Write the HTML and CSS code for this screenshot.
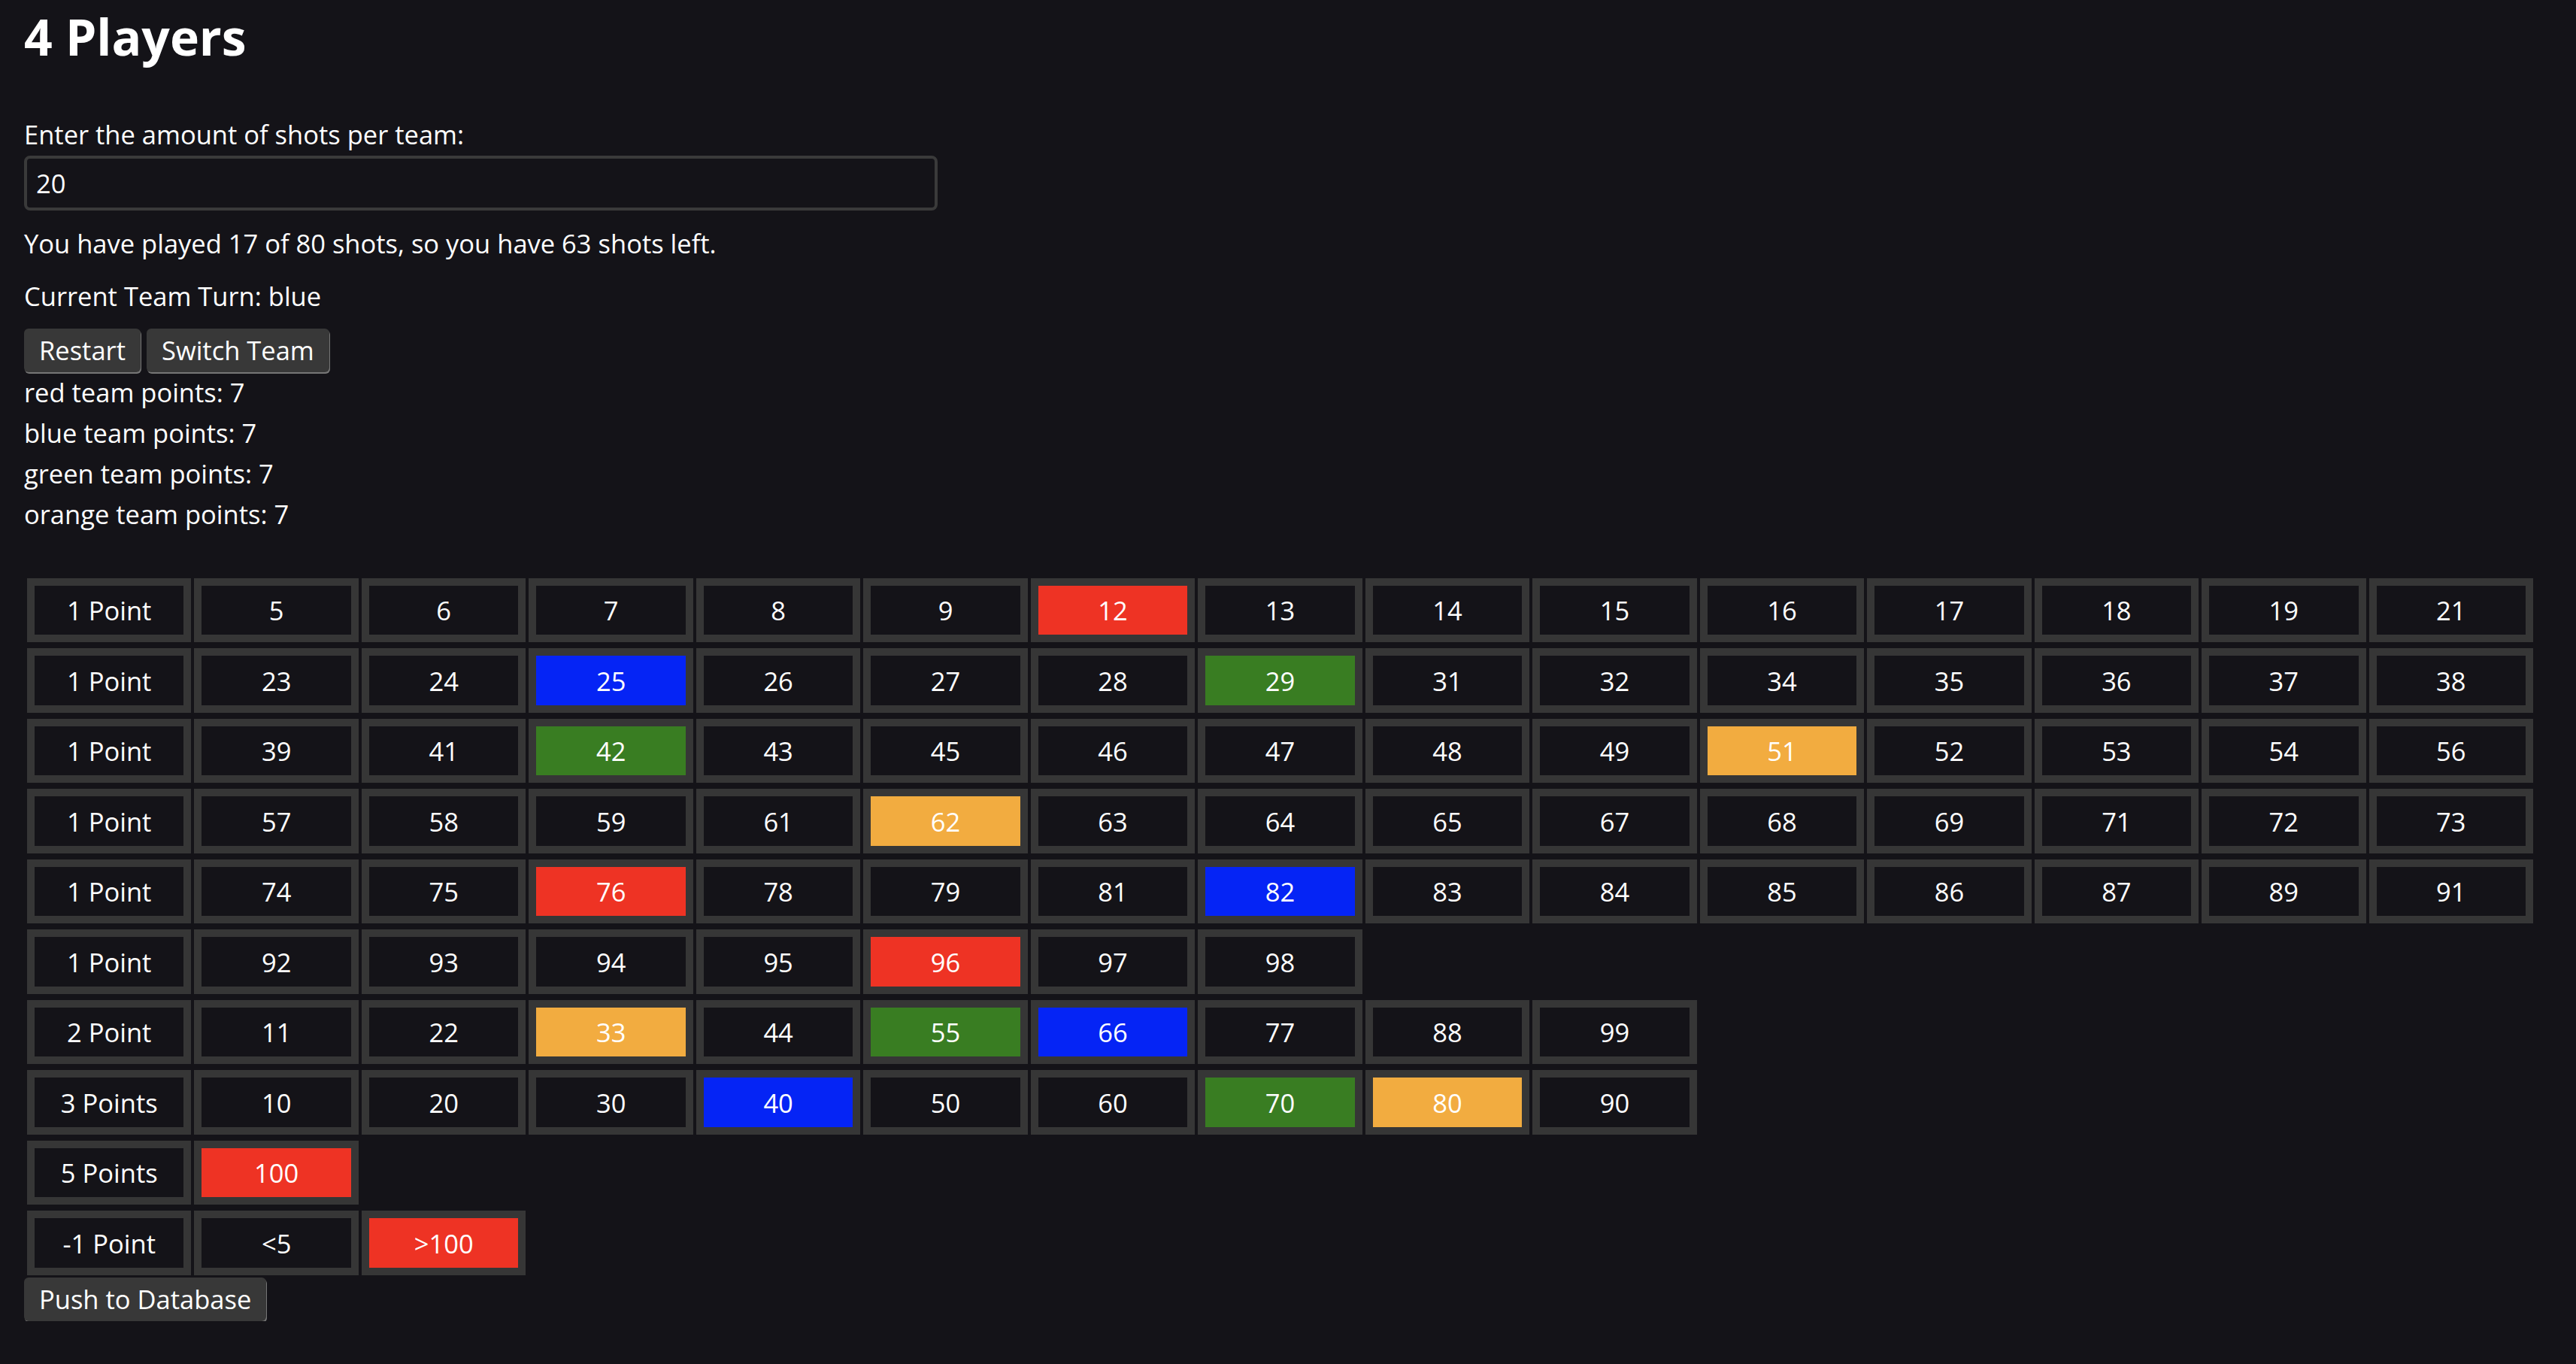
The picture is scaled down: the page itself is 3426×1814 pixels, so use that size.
FILE: index.html
```html
<!DOCTYPE html>
<html lang="en">
<head>
<meta charset="utf-8">
<title>4 Players</title>
<link rel="stylesheet" href="styles.css">
</head>
<body>
<main class="page">
  <h1 class="title">4 Players</h1>
  <label class="line label" for="shots">Enter the amount of shots per team:</label>
  <input class="shots-input" id="shots" type="text" value="20">
  <p class="line status">You have played 17 of 80 shots, so you have 63 shots left.</p>
  <p class="line turn">Current Team Turn: blue</p>
  <div class="actions">
    <button class="btn">Restart</button>
    <button class="btn">Switch Team</button>
  </div>
  <div class="scores">
    <div class="line">red team points: 7</div>
    <div class="line">blue team points: 7</div>
    <div class="line">green team points: 7</div>
    <div class="line">orange team points: 7</div>
  </div>
  <div class="board">
    <div class="row">
      <div class="cell">1 Point</div><div class="cell">5</div><div class="cell">6</div><div class="cell">7</div><div class="cell">8</div><div class="cell">9</div><div class="cell red">12</div><div class="cell">13</div><div class="cell">14</div><div class="cell">15</div><div class="cell">16</div><div class="cell">17</div><div class="cell">18</div><div class="cell">19</div><div class="cell">21</div>
    </div>
    <div class="row">
      <div class="cell">1 Point</div><div class="cell">23</div><div class="cell">24</div><div class="cell blue">25</div><div class="cell">26</div><div class="cell">27</div><div class="cell">28</div><div class="cell green">29</div><div class="cell">31</div><div class="cell">32</div><div class="cell">34</div><div class="cell">35</div><div class="cell">36</div><div class="cell">37</div><div class="cell">38</div>
    </div>
    <div class="row">
      <div class="cell">1 Point</div><div class="cell">39</div><div class="cell">41</div><div class="cell green">42</div><div class="cell">43</div><div class="cell">45</div><div class="cell">46</div><div class="cell">47</div><div class="cell">48</div><div class="cell">49</div><div class="cell orange">51</div><div class="cell">52</div><div class="cell">53</div><div class="cell">54</div><div class="cell">56</div>
    </div>
    <div class="row">
      <div class="cell">1 Point</div><div class="cell">57</div><div class="cell">58</div><div class="cell">59</div><div class="cell">61</div><div class="cell orange">62</div><div class="cell">63</div><div class="cell">64</div><div class="cell">65</div><div class="cell">67</div><div class="cell">68</div><div class="cell">69</div><div class="cell">71</div><div class="cell">72</div><div class="cell">73</div>
    </div>
    <div class="row">
      <div class="cell">1 Point</div><div class="cell">74</div><div class="cell">75</div><div class="cell red">76</div><div class="cell">78</div><div class="cell">79</div><div class="cell">81</div><div class="cell blue">82</div><div class="cell">83</div><div class="cell">84</div><div class="cell">85</div><div class="cell">86</div><div class="cell">87</div><div class="cell">89</div><div class="cell">91</div>
    </div>
    <div class="row">
      <div class="cell">1 Point</div><div class="cell">92</div><div class="cell">93</div><div class="cell">94</div><div class="cell">95</div><div class="cell red">96</div><div class="cell">97</div><div class="cell">98</div>
    </div>
    <div class="row">
      <div class="cell">2 Point</div><div class="cell">11</div><div class="cell">22</div><div class="cell orange">33</div><div class="cell">44</div><div class="cell green">55</div><div class="cell blue">66</div><div class="cell">77</div><div class="cell">88</div><div class="cell">99</div>
    </div>
    <div class="row">
      <div class="cell">3 Points</div><div class="cell">10</div><div class="cell">20</div><div class="cell">30</div><div class="cell blue">40</div><div class="cell">50</div><div class="cell">60</div><div class="cell green">70</div><div class="cell orange">80</div><div class="cell">90</div>
    </div>
    <div class="row">
      <div class="cell">5 Points</div><div class="cell red">100</div>
    </div>
    <div class="row">
      <div class="cell">-1 Point</div><div class="cell">&lt;5</div><div class="cell red">&gt;100</div>
    </div>
  </div>
  <button class="btn push">Push to Database</button>
</main>
</body>
</html>
```
FILE: styles.css
```css
html, body {
  margin: 0;
  padding: 0;
  background: #141318;
}

.page {
  display: flex;
  flex-direction: column;
  align-items: flex-start;
  padding: 0 0 0 32px;
  color: #ffffff;
  font-family: "Open Sans", "Noto Sans", sans-serif;
  font-size: 34.5px;
}

.title {
  margin: 13.6px 0 0 0;
  font-size: 66px;
  line-height: 68px;
  font-weight: 700;
}

.line {
  display: block;
  margin: 0;
  line-height: 54px;
}

.label {
  margin-top: 70px;
}

.shots-input {
  box-sizing: border-box;
  width: 1215px;
  height: 73px;
  margin: 1.4px 0 0 0;
  padding: 0 12px;
  border: 4px solid #3a3a3a;
  border-radius: 8px;
  background: #141318;
  color: #ffffff;
  font-family: inherit;
  font-size: 34.5px;
  outline: none;
}

.status {
  margin-top: 16.6px;
}

.turn {
  margin-top: 16px;
}

.actions {
  display: flex;
  gap: 8px;
  margin-top: 16.4px;
}

.btn {
  box-sizing: border-box;
  height: 58px;
  padding: 0 20px;
  border: none;
  border-radius: 6px;
  background: #383838;
  color: #ffffff;
  font-family: inherit;
  font-size: 34.5px;
  line-height: 58px;
  white-space: nowrap;
  box-shadow: 1px 2px 0 0 #767676;
}

.scores {
  display: flex;
  flex-direction: column;
}

.board {
  display: flex;
  flex-direction: column;
  gap: 8px;
  margin: 58px 0 0 4px;
}

.row {
  display: grid;
  grid-template-columns: repeat(15, 218.47px);
  column-gap: 4px;
}

.cell {
  box-sizing: border-box;
  height: 85.5px;
  display: flex;
  align-items: center;
  justify-content: center;
  border: 10px solid #363636;
  background: #141318;
  background-clip: padding-box;
  line-height: 47px;
}

.red { background-color: #ee3324; }
.blue { background-color: #0524f5; }
.green { background-color: #397d22; }
.orange { background-color: #f2ac40; }

.push {
  margin-top: 3px;
}
```
